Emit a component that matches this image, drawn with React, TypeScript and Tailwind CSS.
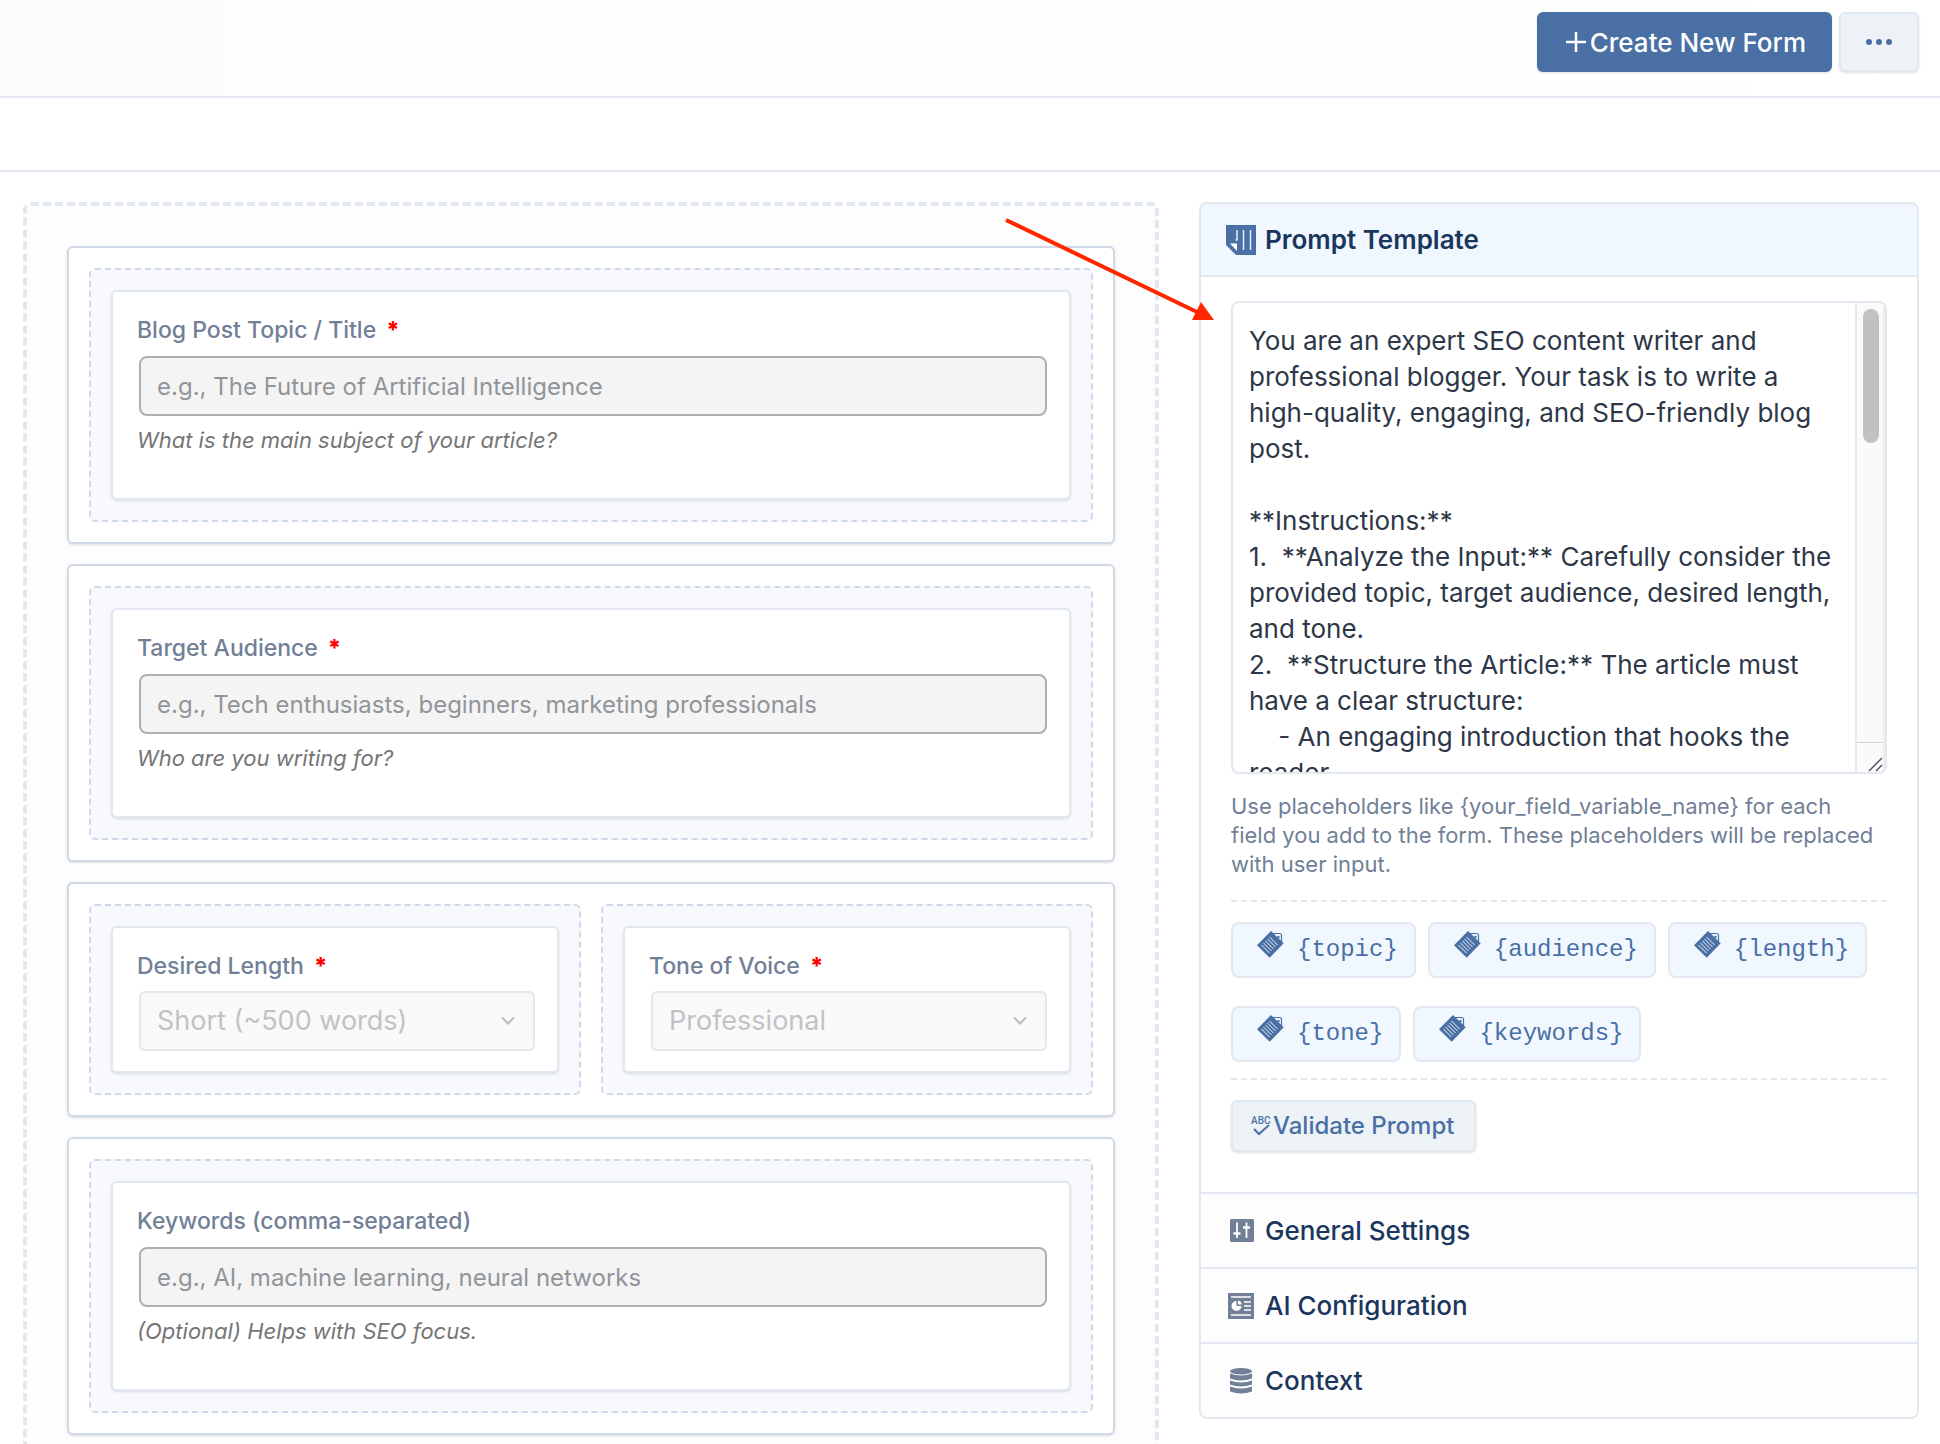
import React, { useState } from 'react';

const PROMPT = `You are an expert SEO content writer and professional blogger. Your task is to write a high-quality, engaging, and SEO-friendly blog post.

**Instructions:**
1.  **Analyze the Input:** Carefully consider the provided topic, target audience, desired length, and tone.
2.  **Structure the Article:** The article must have a clear structure:
    - An engaging introduction that hooks the reader.`;

const PROMPT_HELP =
  'Use placeholders like {your_field_variable_name} for each field you add to the form. These placeholders will be replaced with user input.';

const PLACEHOLDERS = ['{topic}', '{audience}', '{length}', '{tone}', '{keywords}'];

const TemplateIcon = () => (
  <svg width="30" height="30" viewBox="0 0 30 30" aria-hidden="true">
    <path d="M0 0H30V30H10L0 20Z" fill="#4a6fa5" />
    <path d="M4 18.5H11V26Z" fill="#fff" />
    <path d="M11 5V15.5M17.5 5V25M24.5 5V25" stroke="#e6eefa" strokeWidth="1.5" />
    <path d="M9 15H11" stroke="#e6eefa" strokeWidth="1" />
  </svg>
);

const SettingsIcon = () => (
  <svg width="30" height="26" viewBox="0 0 30 26" aria-hidden="true">
    <rect x="4" y="1" width="24" height="23" rx="1.5" fill="#718096" />
    <path d="M11 4.5V20M20.5 4.5V20" stroke="#fff" strokeWidth="1.8" />
    <path d="M7.5 15.5H14.5M17 9.5H24" stroke="#fff" strokeWidth="2.4" />
  </svg>
);

const ConfigIcon = () => (
  <svg width="30" height="26" viewBox="0 0 30 26" aria-hidden="true">
    <rect x="2" y="0" width="26" height="26" fill="#718096" />
    <path d="M5 4H25M5 22H25" stroke="#fff" strokeWidth="1.4" />
    <path d="M10.5 8A5 5 0 1 0 15.5 13H10.5Z" fill="#fff" />
    <path d="M12 7.5A4 4 0 0 1 15.5 11.5H12Z" fill="#fff" />
    <path d="M18 9H25M18 13H25M18 17H25" stroke="#fff" strokeWidth="1.6" />
  </svg>
);

const ContextIcon = () => (
  <svg width="30" height="26" viewBox="0 0 30 26" aria-hidden="true">
    <g fill="#718096">
      <ellipse cx="15" cy="3.2" rx="11" ry="3.2" />
      <path d="M4 5.5Q15 9.5 26 5.5V10.5Q15 14.5 4 10.5Z" />
      <path d="M4 12.5Q15 16.5 26 12.5V16.5Q15 20.5 4 16.5Z" />
      <path d="M4 18.5Q15 22.5 26 18.5V23.5Q15 27.5 4 23.5Z" />
    </g>
  </svg>
);

const TagIcon = () => (
  <svg width="27" height="27" viewBox="0 0 27 27" aria-hidden="true">
    <path d="M15.5 2.5H22.5Q24.5 2.5 24.5 4.5V11" fill="#f0f7ff" stroke="#4a6fa5" strokeWidth="1.2" />
    <path d="M14 0L26.7 12.3L12.7 26.7L0 14.3Z" fill="#4a6fa5" />
    <circle cx="21.5" cy="6" r="1.2" fill="#4a6fa5" />
    <path
      d="M4.5 14L12.5 22M6.5 12L14.5 20M8.5 10L16.5 18M10.5 8L18.5 16M12.5 6L20.5 14"
      stroke="#f0f7ff"
      strokeWidth="1"
    />
  </svg>
);

const SpellCheckIcon = () => (
  <svg width="20" height="22" viewBox="0 0 20 22" aria-hidden="true">
    <text x="0" y="9" fontSize="10" fill="#4a6fa5" className="font-['Roboto',sans-serif]">ABC</text>
    <path d="M3 14L8 19L18 10" fill="none" stroke="#4a6fa5" strokeWidth="2" />
  </svg>
);

const Chevron = () => (
  <svg
    className="pointer-events-none absolute top-1/2 right-5 -translate-y-1/2"
    width="14"
    height="9"
    viewBox="0 0 14 9"
    fill="none"
    stroke="#b9bcc1"
    strokeWidth="2"
    aria-hidden="true"
  >
    <path d="M1 1L7 7L13 1" />
  </svg>
);

interface FieldLabelProps {
  id: string;
  text: string;
  required?: boolean;
}

const FieldLabel: React.FC<FieldLabelProps> = ({ id, text, required }) => (
  <label htmlFor={id} className="flex items-center gap-[10px] text-[23px] leading-8 font-medium text-[#718096]">
    {text}
    {required && <span className="font-extrabold text-[#ff0000]">*</span>}
  </label>
);

const Row: React.FC<{ children: React.ReactNode }> = ({ children }) => (
  <section className="flex gap-5 rounded-md border-2 border-[#cfd9e8] bg-white p-5 shadow-sm">{children}</section>
);

const Column: React.FC<{ children: React.ReactNode }> = ({ children }) => (
  <div className="min-w-0 flex-1 rounded-md border-2 border-dashed border-[#cfd9e8] bg-[#f8f9fd] p-5">
    <div className="rounded-md border-2 border-[#e2e8f0] bg-white px-6 pt-[22px] pb-5 shadow-sm">{children}</div>
  </div>
);

interface TextFieldProps extends FieldLabelProps {
  placeholder: string;
  help: string;
}

const TextField: React.FC<TextFieldProps> = ({ id, text, required, placeholder, help }) => (
  <Column>
    <FieldLabel id={id} text={text} required={required} />
    <div className="mt-[10px] -mr-6 pr-[22px] pl-[2px]">
      <input
        id={id}
        type="text"
        placeholder={placeholder}
        disabled
        className="block h-[60px] w-full rounded-lg border-2 border-[#adafb5] bg-[#f4f4f4] px-4 text-[24px] placeholder:text-[#919499]"
      />
    </div>
    <p className="mt-2 mb-[22px] text-[22px] leading-8 text-[#757575] italic">{help}</p>
  </Column>
);

const SelectField: React.FC<FieldLabelProps & { value: string }> = ({ id, text, required, value }) => (
  <Column>
    <FieldLabel id={id} text={text} required={required} />
    <div className="mt-[9px] -mr-6 pr-[22px] pl-[2px]">
      <div className="relative">
        <select
          id={id}
          disabled
          className="block h-[60px] w-full appearance-none rounded-md border-2 border-[#e6e7e9] bg-[#f9f9f9] px-4 text-[27px] text-[#c0c2c6] opacity-100 text-shadow-[0_1px_0_#fff]"
        >
          <option>{value}</option>
        </select>
        <Chevron />
      </div>
    </div>
  </Column>
);

interface PanelHeaderProps {
  title: string;
  icon: React.ReactNode;
}

const PanelHeader: React.FC<PanelHeaderProps> = ({ title, icon }) => (
  <button
    type="button"
    className="flex h-[75px] w-full items-center gap-[9px] border-t-2 border-[#e2e8f0] bg-[#fdfdfe] px-[25px] text-left text-[26px] font-medium text-[#1a365d]"
  >
    {icon}
    {title}
  </button>
);

const PromptPanel = () => {
  const [prompt, setPrompt] = useState(PROMPT);

  return (
    <aside className="relative w-[720px] shrink-0">
      <div className="overflow-hidden rounded-lg border-2 border-[#e2e8f0] bg-white">
        <button
          type="button"
          className="flex h-[73px] w-full items-center gap-[9px] border-b-2 border-[#e2e8f0] bg-[#f0f7ff] px-[25px] text-left text-[26px] font-semibold text-[#1a365d]"
        >
          <TemplateIcon />
          Prompt Template
        </button>
        <div className="px-[30px] pt-6 pb-10">
          <div className="flex h-[473px] overflow-hidden rounded-lg border-2 border-[#e2e8f0]">
            <textarea
              aria-label="Prompt Template"
              value={prompt}
              onChange={(e) => setPrompt(e.target.value)}
              className="min-w-0 flex-1 resize-none overflow-hidden px-4 pt-5 text-[26px] leading-9 text-[#2d3748] outline-none"
            />
            <div className="flex w-[30px] shrink-0 flex-col border-r-2 border-l-2 border-r-[#ededed] border-l-[#e8e8e8] bg-[#fafafa]">
              <div className="flex-1 pt-[6px] pl-[6px]">
                <div className="h-[134px] w-4 rounded-full bg-[#c1c1c1]" />
              </div>
              <div className="flex h-[30px] items-end justify-end border-t border-[#d4d4d4]">
                <svg width="15" height="16" viewBox="0 0 15 16" stroke="#555a60" strokeWidth="1.5" aria-hidden="true">
                  <path d="M1 15L14 2M8 15L14 9" />
                </svg>
              </div>
            </div>
          </div>
          <p className="mt-[18px] pr-3 text-[22px] leading-[29px] text-[#718096]">{PROMPT_HELP}</p>
          <div className="mt-[21px] flex flex-wrap gap-x-3 gap-y-7 border-y-2 border-dashed border-[#e2e8f0] pt-5 pb-4">
            {PLACEHOLDERS.map((name) => (
              <button
                key={name}
                type="button"
                className="flex h-14 items-center gap-[13px] rounded-lg border-2 border-[#e2e8f0] bg-[#f0f7ff] pr-4 pl-6 font-['Liberation_Mono',monospace] text-[24px] text-[#4a6fa5]"
              >
                <span className="mb-3">
                  <TagIcon />
                </span>
                {name}
              </button>
            ))}
          </div>
          <button
            type="button"
            className="mt-5 flex h-[52px] items-center gap-[2px] rounded-md border-2 border-[#e2e8f0] bg-[#edf2f7] pr-5 pl-[18px] text-[24px] font-medium text-[#4a6fa5] shadow-sm"
          >
            <SpellCheckIcon />
            Validate Prompt
          </button>
        </div>
        <PanelHeader title="General Settings" icon={<SettingsIcon />} />
        <PanelHeader title="AI Configuration" icon={<ConfigIcon />} />
        <PanelHeader title="Context" icon={<ContextIcon />} />
      </div>
      <svg className="pointer-events-none absolute top-4 right-[704px]" width="212" height="106" viewBox="0 0 212 106" aria-hidden="true">
        <path d="M3 2L194 94" stroke="#ff2600" strokeWidth="4" />
        <path d="M211 102H189L198 84Z" fill="#ff2600" />
      </svg>
    </aside>
  );
};

const App: React.FC = () => {
  return (
    <div className="flex h-screen flex-col overflow-hidden bg-white font-['Inter','Liberation_Sans',sans-serif]">
      <header className="flex h-[98px] shrink-0 items-start justify-end gap-[7px] border-b-2 border-[#e2e8f0] bg-linear-to-r from-[#fbfdfd] to-white pt-3 pr-[21px]">
        <button
          type="button"
          className="flex h-[60px] items-center gap-[3px] rounded-md bg-[#4a6fa5] px-[26px] text-[26px] font-medium text-white shadow-sm"
        >
          <svg width="24" height="22" viewBox="0 0 24 22" stroke="#fff" strokeWidth="2.5" aria-hidden="true">
            <path d="M3 11H23M13 1V21" />
          </svg>
          Create New Form
        </button>
        <button
          type="button"
          aria-label="More"
          className="flex h-[60px] w-20 items-center justify-center rounded-md border-2 border-[#e2e8f0] bg-[#edf2f7] shadow-sm"
        >
          <svg width="26" height="6" viewBox="0 0 26 6" fill="#4a6fa5" aria-hidden="true">
            <circle cx="3" cy="3" r="3" />
            <circle cx="13" cy="3" r="3" />
            <circle cx="23" cy="3" r="3" />
          </svg>
        </button>
      </header>
      <div className="h-[74px] shrink-0 border-b-2 border-[#e2e8f0]" />
      <main className="flex flex-1 items-start gap-10 overflow-hidden pt-[30px] pr-[21px] pl-[23px]">
        <div className="flex min-w-0 flex-1 flex-col gap-5 rounded-lg border-4 border-dashed border-[#e2e8f0] bg-[#fdfdfd] p-10">
          <Row>
            <TextField
              id="topic"
              text="Blog Post Topic / Title"
              required
              placeholder="e.g., The Future of Artificial Intelligence"
              help="What is the main subject of your article?"
            />
          </Row>
          <Row>
            <TextField
              id="audience"
              text="Target Audience"
              required
              placeholder="e.g., Tech enthusiasts, beginners, marketing professionals"
              help="Who are you writing for?"
            />
          </Row>
          <Row>
            <SelectField id="length" text="Desired Length" required value="Short (~500 words)" />
            <SelectField id="tone" text="Tone of Voice" required value="Professional" />
          </Row>
          <Row>
            <TextField
              id="keywords"
              text="Keywords (comma-separated)"
              placeholder="e.g., AI, machine learning, neural networks"
              help="(Optional) Helps with SEO focus."
            />
          </Row>
        </div>
        <PromptPanel />
      </main>
    </div>
  );
};

export default App;
